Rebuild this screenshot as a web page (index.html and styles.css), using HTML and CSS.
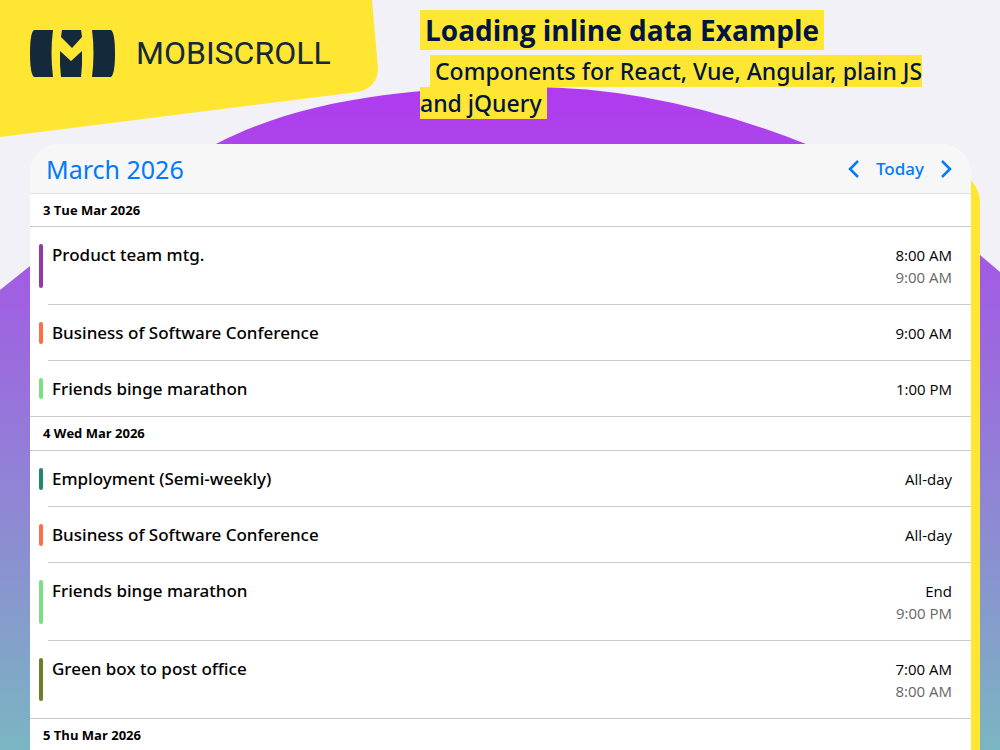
FILE: index.html
```
<!DOCTYPE html>
<html lang="en">
<head>
    <meta charset="UTF-8">
    <meta name="viewport" content="width=device-width, initial-scale=1">
    <title>Loading inline data Example</title>
    <link rel="stylesheet" href="styles.css">
</head>
<body>
    <svg class="backdrop" viewBox="0 0 1000 750" preserveAspectRatio="none" aria-hidden="true">
        <defs>
            <linearGradient id="dome" gradientUnits="userSpaceOnUse" x1="0" y1="87" x2="0" y2="750">
                <stop offset="0" stop-color="#b03aef"/>
                <stop offset="0.3" stop-color="#a05fe2"/>
                <stop offset="0.7" stop-color="#8b8fd1"/>
                <stop offset="1" stop-color="#7ab6c2"/>
            </linearGradient>
        </defs>
        <path fill="url(#dome)" d="M0 290L30 266Q120 190 216 144C310 95 430 87 530 87Q662 87 806 144Q900 184 980 255L1000 272V750H0Z"/>
        <path fill="#ffe633" d="M0 0H372L378 68Q378 87 358 92L0 137Z"/>
    </svg>

    <header class="page-header">
        <a class="logo" href="#">
            <svg class="logo-mark" viewBox="0 0 85 47" width="85" height="47" aria-hidden="true">
                <path d="M4 0H23Q20 23 23 47H4Q0 44 0 23Q0 3 4 0Z"/>
                <path d="M62 0H81Q85 3 85 23Q85 44 81 47H62Q65 23 62 0Z"/>
                <path d="M32 0H51L52 7L42 18L31 7Z"/>
                <path d="M30 21L41 31L52 21V35L51 47H31L30 35Z"/>
            </svg>
            <span class="logo-text">MOBISCROLL</span>
        </a>
        <div class="intro">
            <h1><span class="mark">Loading inline data Example</span></h1>
            <h2><span class="mark">Components for React, Vue, Angular, plain JS and jQuery</span></h2>
        </div>
    </header>

    <main class="agenda">
        <div class="toolbar">
            <button type="button" class="month">March 2026</button>
            <div class="nav">
                <button type="button" class="arrow" aria-label="Previous">
                    <svg viewBox="0 0 12 18" width="12" height="18"><path d="M10 1L2 9L10 17"/></svg>
                </button>
                <button type="button" class="today">Today</button>
                <button type="button" class="arrow" aria-label="Next">
                    <svg viewBox="0 0 12 18" width="12" height="18"><path d="M2 1L10 9L2 17"/></svg>
                </button>
            </div>
        </div>

        <section class="day">
            <h3>3 Tue Mar 2026</h3>
            <ul>
                <li class="event">
                    <span class="bar purple"></span>
                    <div class="info">
                        <span class="title">Product team mtg.</span>
                        <div class="time"><span>8:00 AM</span><span class="end">9:00 AM</span></div>
                    </div>
                </li>
                <li class="event">
                    <span class="bar orange"></span>
                    <div class="info">
                        <span class="title">Business of Software Conference</span>
                        <div class="time"><span>9:00 AM</span></div>
                    </div>
                </li>
                <li class="event">
                    <span class="bar green"></span>
                    <div class="info">
                        <span class="title">Friends binge marathon</span>
                        <div class="time"><span>1:00 PM</span></div>
                    </div>
                </li>
            </ul>
        </section>

        <section class="day">
            <h3>4 Wed Mar 2026</h3>
            <ul>
                <li class="event">
                    <span class="bar teal"></span>
                    <div class="info">
                        <span class="title">Employment (Semi-weekly)</span>
                        <div class="time"><span>All-day</span></div>
                    </div>
                </li>
                <li class="event">
                    <span class="bar orange"></span>
                    <div class="info">
                        <span class="title">Business of Software Conference</span>
                        <div class="time"><span>All-day</span></div>
                    </div>
                </li>
                <li class="event">
                    <span class="bar green"></span>
                    <div class="info">
                        <span class="title">Friends binge marathon</span>
                        <div class="time"><span>End</span><span class="end">9:00 PM</span></div>
                    </div>
                </li>
                <li class="event">
                    <span class="bar olive"></span>
                    <div class="info">
                        <span class="title">Green box to post office</span>
                        <div class="time"><span>7:00 AM</span><span class="end">8:00 AM</span></div>
                    </div>
                </li>
            </ul>
        </section>

        <section class="day">
            <h3>5 Thu Mar 2026</h3>
        </section>
    </main>
</body>
</html>
```
FILE: styles.css
```
* {
    box-sizing: border-box;
}
body {
    margin: 0;
    height: 100vh;
    display: flex;
    flex-direction: column;
    overflow: hidden;
    background: #f2f1f7;
    color: #000;
    font-family: "Segoe UI", "Noto Sans", "Open Sans", sans-serif;
}
h1, h2, h3, ul {
    margin: 0;
    padding: 0;
}
button {
    padding: 0;
    border: none;
    background: none;
    color: #007aff;
    font-family: inherit;
    cursor: pointer;
}

/* purple dome and yellow logo panel */
.backdrop {
    position: absolute;
    top: 0;
    left: 0;
    z-index: -1;
    width: 100%;
    height: 100%;
}

.page-header {
    display: grid;
    grid-template-columns: 390px 1fr;
    min-height: 144px;
    padding: 10px 30px 0;
}
.logo {
    display: flex;
    align-items: center;
    align-self: start;
    gap: 21px;
    margin-top: 20px;
    color: #14293b;
    text-decoration: none;
}
.logo-mark {
    fill: #14293b;
}
.logo-text {
    font: 400 32px/47px Roboto, sans-serif;
}
.intro {
    max-width: 530px;
    color: #001541;
}
.intro h1 {
    font-family: "Segoe UI", "Open Sans", sans-serif;
    font-size: 28px;
    line-height: 41px;
}
.intro h2 {
    margin-top: 4px;
    font-size: 23px;
    font-weight: 500;
    line-height: 32px;
    text-indent: 10px;
}
.mark {
    padding: 1px 5px;
    background: #ffe633;
}
.intro h2 .mark {
    padding: 0 5px;
}

/* agenda card */
.agenda {
    flex: 1;
    margin: 0 29px 0 30px;
    background: #fff;
    border-radius: 30px 30px 0 0;
    box-shadow: 9px 28px 0 #ffe633;
}
.toolbar {
    display: flex;
    align-items: center;
    justify-content: space-between;
    height: 50px;
    padding: 0 19px 0 16px;
    background: #f7f7f7;
    border-bottom: 1px solid #e2e2e2;
    border-radius: 30px 30px 0 0;
}
.month {
    font-size: 25px;
    line-height: 34px;
}
.nav {
    display: flex;
    align-items: center;
    gap: 16px;
}
.today {
    font-size: 17px;
    font-weight: 500;
    line-height: 24px;
}
.arrow {
    display: flex;
}
.arrow svg {
    fill: none;
    stroke: #007aff;
    stroke-width: 2.5;
}
.day h3 {
    padding: 0 13px;
    border-bottom: 1px solid #ccc;
    font-family: "Segoe UI", "Open Sans", sans-serif;
    font-size: 13px;
    line-height: 33px;
}
.day:first-of-type h3 {
    line-height: 32px;
}
.event {
    display: flex;
    gap: 5px;
    padding-left: 9px;
}
.bar {
    width: 4px;
    margin: 17px 0;
    border-radius: 2px;
}
.purple { background: #913aa7; }
.orange { background: #ff6d42; }
.green { background: #7bde83; }
.teal { background: #1f8a70; }
.olive { background: #6f7d28; }
.info {
    flex: 1;
    display: flex;
    justify-content: space-between;
    padding: 17px 19px 16px 4px;
    border-bottom: 1px solid #ccc;
    line-height: 22px;
}
ul {
    list-style: none;
}
.day ul {
    border-bottom: 1px solid #ccc;
}
.event:last-child .info {
    border-bottom: none;
}
.title {
    font-size: 17px;
    font-weight: 500;
}
.time {
    display: flex;
    flex-direction: column;
    align-items: flex-end;
    font-family: "Segoe UI", "Open Sans", sans-serif;
    font-size: 15px;
}
.end {
    color: #666;
}
```
